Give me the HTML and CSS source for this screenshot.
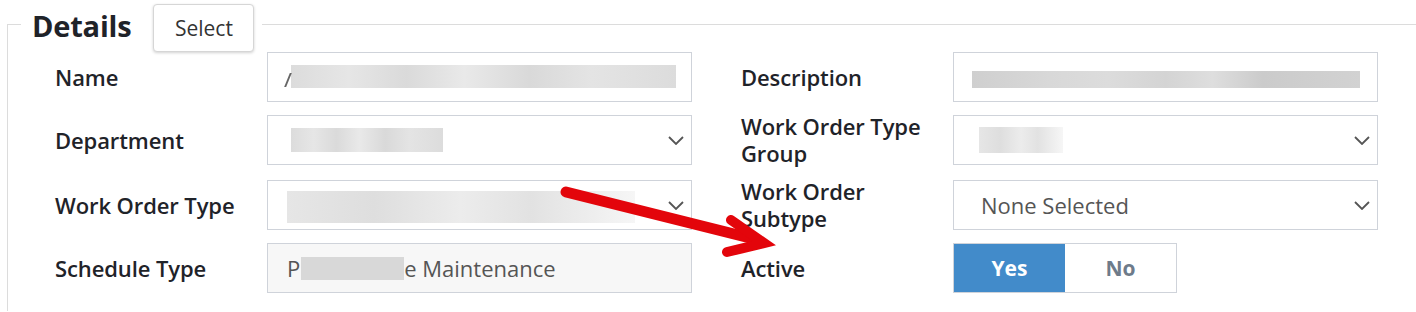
FILE: index.html
```html
<!DOCTYPE HTML>
<html>
<head>
<title>Details</title>
<link rel="stylesheet" href="styles.css">
</head>
<body>
<fieldset class="details">
    <legend class="details-legend">
        <span class="details-title">Details</span>
        <button class="btn-select">Select</button>
    </legend>

    <div class="form-grid">
        <label class="field-label">Name</label>
        <div class="field-input"><span class="cut-stroke"></span><span class="redacted name-blur"></span></div>
        <span class="spacer"></span>
        <label class="field-label">Description</label>
        <div class="field-input"><span class="redacted desc-blur"></span></div>

        <label class="field-label">Department</label>
        <div class="field-input select"><span class="redacted dept-blur"></span><svg class="chevron" viewBox="0 0 16 9"><path d="M1 1 L8 8 L15 1"/></svg></div>
        <span class="spacer"></span>
        <label class="field-label">Work Order Type Group</label>
        <div class="field-input select"><span class="redacted fade group-blur"></span><svg class="chevron" viewBox="0 0 16 9"><path d="M1 1 L8 8 L15 1"/></svg></div>

        <label class="field-label">Work Order Type</label>
        <div class="field-input select"><span class="redacted fade type-blur"></span><svg class="chevron" viewBox="0 0 16 9"><path d="M1 1 L8 8 L15 1"/></svg></div>
        <span class="spacer"></span>
        <label class="field-label">Work Order Subtype</label>
        <div class="field-input select"><span class="value">None Selected</span><svg class="chevron" viewBox="0 0 16 9"><path d="M1 1 L8 8 L15 1"/></svg></div>

        <label class="field-label">Schedule Type</label>
        <div class="field-input readonly"><span class="value">P<span class="redacted sched-blur"></span>e Maintenance</span></div>
        <span class="spacer"></span>
        <label class="field-label">Active</label>
        <div class="toggle">
            <button class="toggle-btn on">Yes</button>
            <button class="toggle-btn">No</button>
        </div>
    </div>
</fieldset>

<!-- annotation drawn on top of the form -->
<svg class="annotation" width="1416" height="312" viewBox="0 0 1416 312">
    <path class="arrow-shaft" d="M566 192 L754 239"/>
    <path class="arrow-head" d="M731 220 L764 243 L727 252"/>
</svg>
</body>
</html>
```

FILE: styles.css
```css
body {
    margin: 0;
    font-family: "Open Sans", "Noto Sans", sans-serif;
    color: #222;
    background: #fff;
    overflow: hidden;
    height: 312px;
}

.details {
    margin: 4px 0 0 7px;
    padding: 8px 0 18px 0;
    border: 1px solid #dcdcdc;
    border-right: 0;
    border-bottom: 0;
    min-width: 0;
}

.details-legend {
    display: flex;
    align-items: flex-start;
    margin-left: 13px;
    padding: 0 8px 0 11px;
}

.details-title {
    font-size: 29px;
    font-weight: 700;
    line-height: 40px;
    color: #1f2329;
    margin-top: 2px;
    margin-bottom: -2px;
    letter-spacing: -0.2px;
}

.btn-select {
    margin-left: 22px;
    margin-bottom: -8px;
    width: 101px;
    height: 48px;
    font-family: inherit;
    font-size: 21px;
    color: #333;
    background: #fff;
    border: 1px solid #d6d6d6;
    border-radius: 4px;
    box-shadow: 0 1px 3px rgba(0, 0, 0, 0.18);
    padding: 0;
}

.form-grid {
    display: grid;
    grid-template-columns: 212px 425px 49px 212px 425px;
    row-gap: 11px;
    align-items: center;
    margin-left: 47px;
}

.field-label {
    font-size: 22px;
    font-weight: 600;
    line-height: 27px;
    color: #1f2329;
    padding-right: 4px;
    letter-spacing: -0.1px;
}

.field-input {
    position: relative;
    display: flex;
    align-items: center;
    box-sizing: border-box;
    height: 50px;
    border: 1px solid #cfd3da;
    background: #fff;
    padding-left: 23px;
    font-size: 22px;
    color: #555;
}

.field-input.readonly {
    background: #f7f7f7;
    padding-left: 19px;
}

.field-input.select .value {
    padding-left: 4px;
}

.chevron {
    position: absolute;
    right: 7px;
    top: 20px;
    width: 16px;
    height: 9px;
    fill: none;
    stroke: #555;
    stroke-width: 1.8;
}

.cut-stroke {
    display: inline-block;
    width: 2px;
    height: 14px;
    margin: 6px 0 0 -4px;
    background: #666;
    transform: skewX(-22deg);
    margin-right: 2px;
}

.redacted {
    display: inline-block;
    background: linear-gradient(90deg, #dcdcdc, #e6e6e6 15%, #dadada 30%, #e9e9e9 45%, #d9d9d9 62%, #e4e4e4 78%, #dcdcdc);
}

.redacted.fade {
    background: linear-gradient(90deg, #e6e6e6, #dedede 25%, #ececec 50%, #e2e2e2 70%, #f6f6f6);
}

.name-blur {
    width: 385px;
    height: 23px;
    margin-top: -2px;
}

.desc-blur {
    width: 388px;
    height: 17px;
    margin-left: -5px;
    margin-top: 4px;
    background: linear-gradient(90deg, #cfcfcf, #d8d8d8 20%, #dcdcdc 35%, #d4d4d4 50%, #dedede 62%, #cbcbcb 75%, #d2d2d2);
}

.dept-blur {
    width: 152px;
    height: 24px;
}

.group-blur {
    width: 84px;
    height: 26px;
    margin-left: 2px;
    background: linear-gradient(90deg, #d6d6d6, #dadada 40%, #f4f4f4 80%, #fff);
}

.type-blur {
    width: 348px;
    height: 32px;
    margin-left: -4px;
    margin-top: 4px;
}

.sched-blur {
    width: 103px;
    height: 23px;
    vertical-align: -3px;
    margin-left: 1px;
    background: #d8d8d8;
}

.toggle {
    display: flex;
    width: 224px;
    height: 50px;
    box-sizing: border-box;
    border: 1px solid #cfd3da;
}

.toggle-btn {
    flex: 1;
    border: 0;
    padding: 0;
    font-family: inherit;
    font-size: 21px;
    font-weight: 700;
    color: #6e7b8a;
    background: #fff;
}

.toggle-btn.on {
    color: #fff;
    background: #428bca;
}

.annotation {
    position: absolute;
    left: 0;
    top: 0;
    pointer-events: none;
}

.arrow-shaft {
    fill: none;
    stroke: #e3050b;
    stroke-width: 11;
    stroke-linecap: round;
}

.arrow-head {
    fill: none;
    stroke: #e3050b;
    stroke-width: 10;
    stroke-linejoin: miter;
    stroke-linecap: round;
}
```
